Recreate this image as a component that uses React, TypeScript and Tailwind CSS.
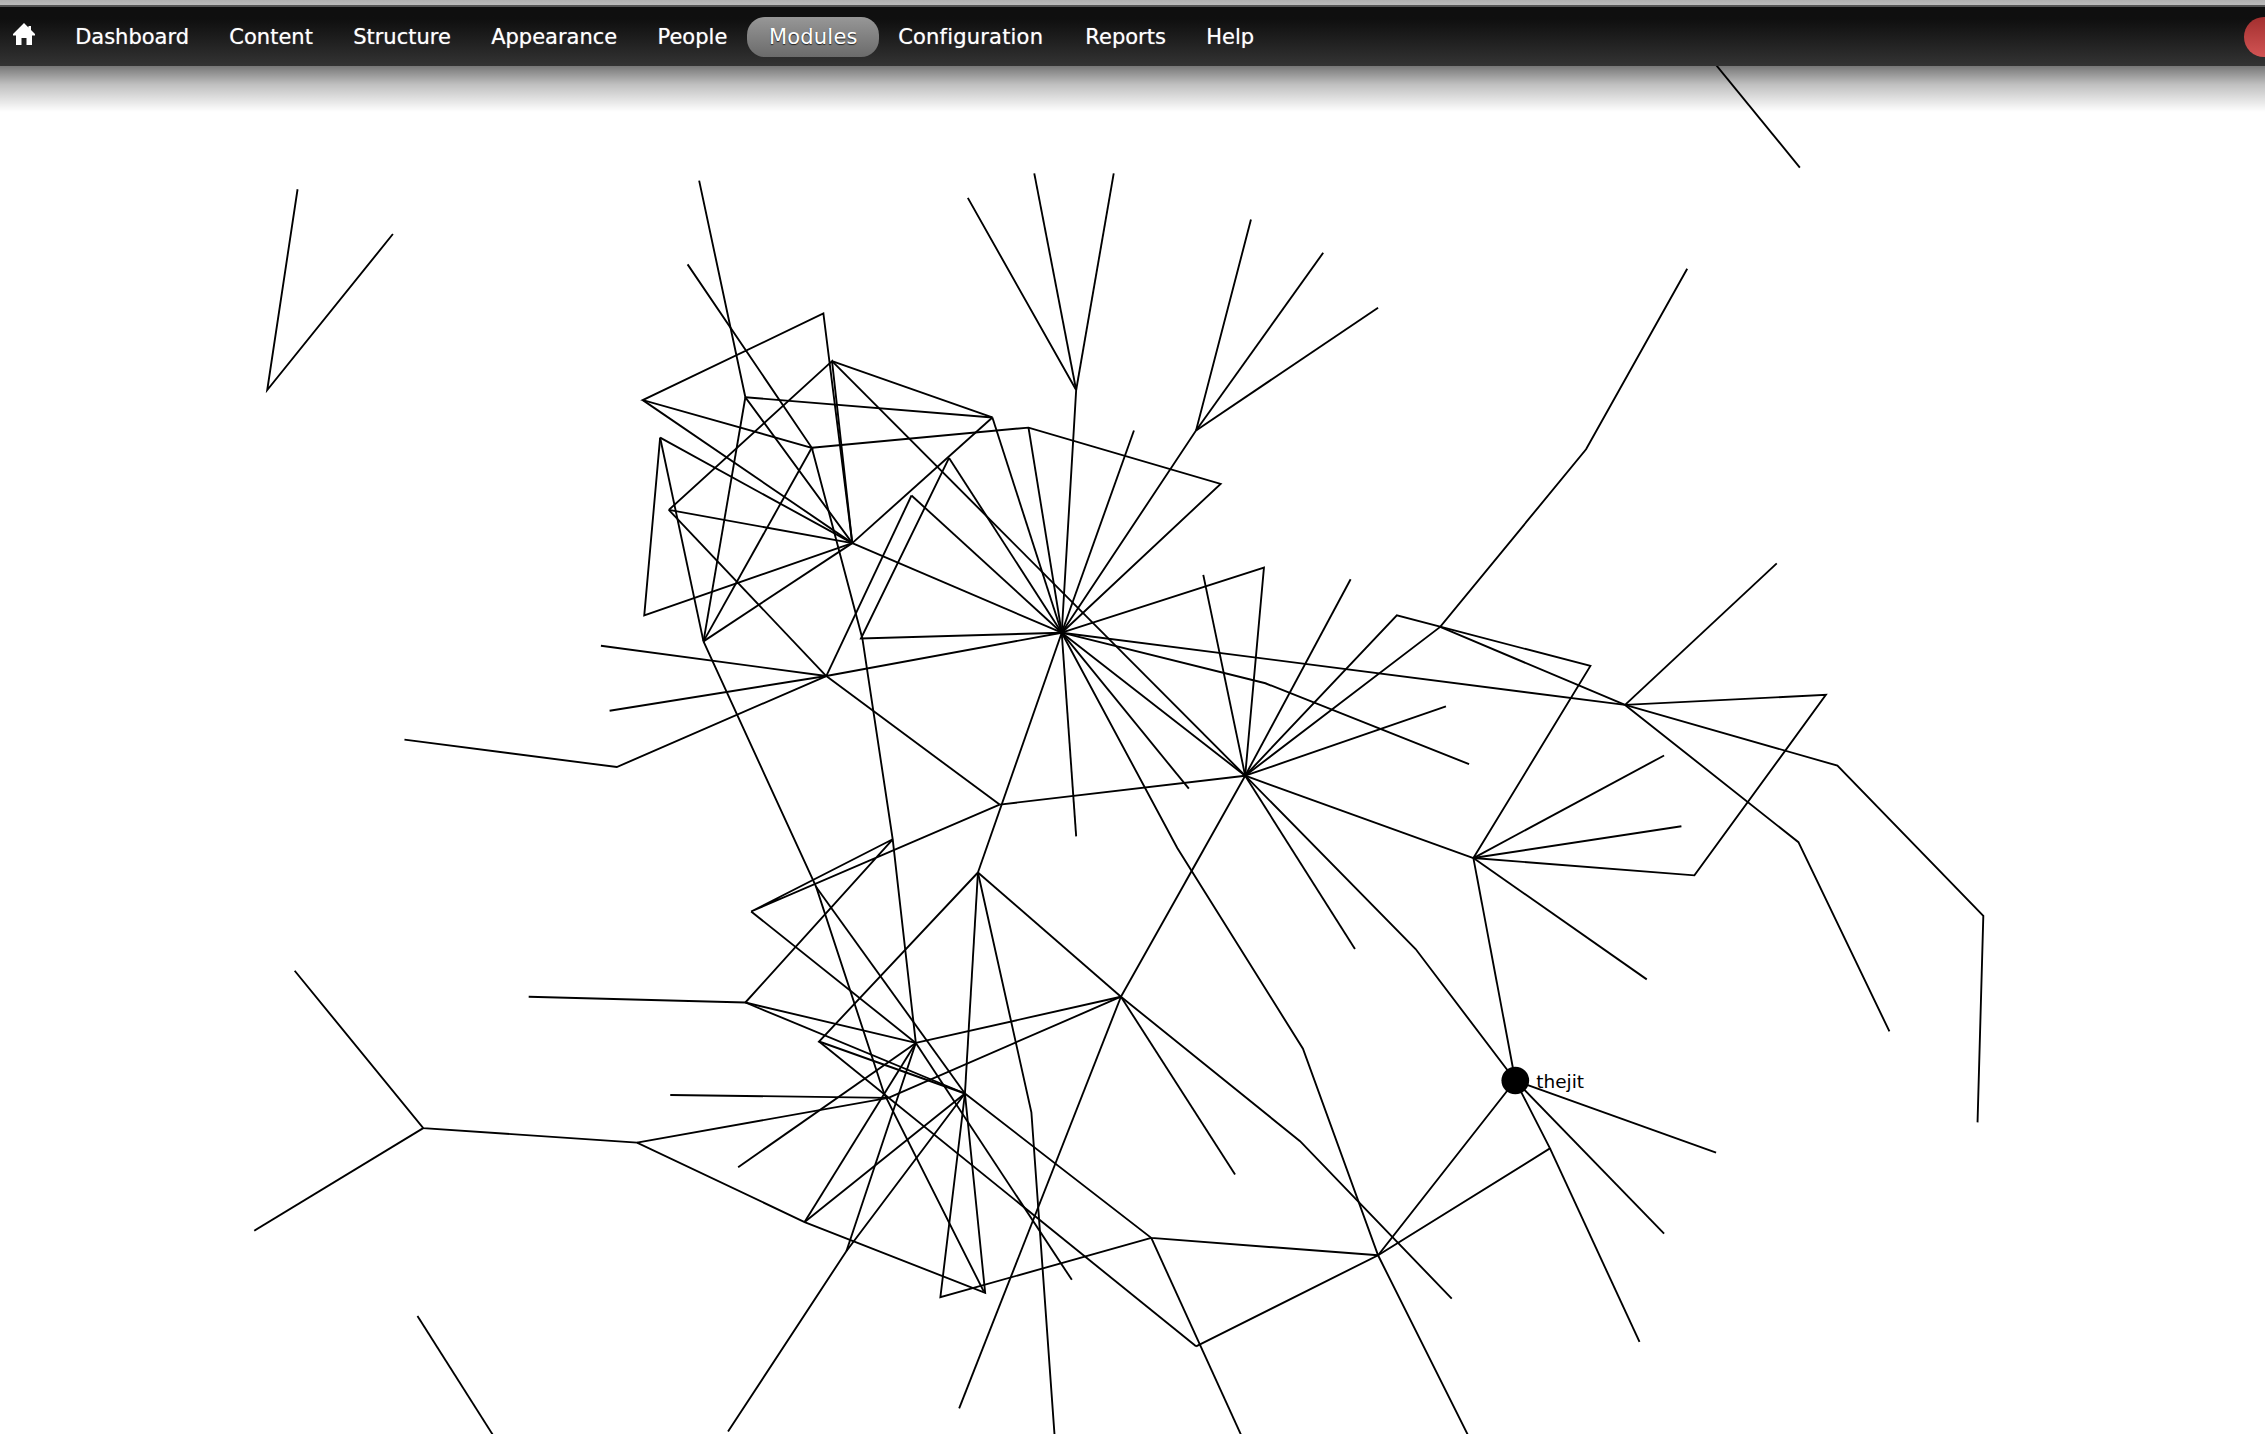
const items = [
  { label: "Dashboard", className: "px-[20.15px] pt-[3px]" },
  { label: "Content", className: "px-[20.15px] pt-[3px]" },
  { label: "Structure", className: "px-[20.15px] pt-[3px]" },
  { label: "Appearance", className: "px-[20.15px] pt-[3px]" },
  { label: "People", className: "px-[20.15px] pt-[3px]" },
  {
    label: "Modules",
    className:
      "flex h-[40px] items-center rounded-[18px] bg-gradient-to-b from-[#979797] to-[#6b6b6b] px-[21.5px] pt-[3px] tracking-[0.2px] [text-shadow:0_1px_1px_#222]",
  },
  { label: "Configuration", className: "pl-[19px] pr-[22px] pt-[3px] tracking-[0.2px]" },
  { label: "Reports", className: "px-[20.15px] pt-[3px]" },
  { label: "Help", className: "px-[20.15px] pt-[3px]" },
];

// graph edges, each one a polyline in the coordinates of the viewBox
const edges: number[][] = [
  [1188, 45, 1246, 116],
  [206, 131, 185, 270, 272, 162],
  [484, 125, 516, 275, 590, 376],
  [516, 275, 687, 289],
  [516, 275, 487, 444],
  [476, 183, 562, 310, 445, 277, 570, 217, 590, 376],
  [445, 277, 590, 376],
  [457, 303, 590, 376],
  [457, 303, 446, 426, 590, 376],
  [457, 303, 487, 444],
  [463, 353, 590, 376],
  [463, 353, 576, 250, 590, 376],
  [463, 353, 572, 468],
  [487, 444, 590, 376],
  [487, 444, 562, 310],
  [576, 250, 687, 289],
  [576, 250, 862, 537],
  [562, 310, 712, 296, 845, 335, 735, 438],
  [712, 296, 735, 438],
  [687, 289, 735, 438],
  [687, 289, 590, 376],
  [657, 317, 735, 438],
  [657, 317, 596, 442, 735, 438],
  [631, 343, 735, 438],
  [631, 343, 572, 468],
  [590, 376, 735, 438],
  [562, 310, 597, 442, 618, 581, 634, 722],
  [572, 468, 735, 438],
  [416, 447, 572, 468],
  [422, 492, 572, 468],
  [280, 512, 427, 531, 572, 468],
  [572, 468, 692, 557],
  [487, 444, 565, 614, 612, 757, 681, 894],
  [565, 614, 668, 757],
  [670, 137, 745, 270, 735, 438],
  [716, 120, 745, 270],
  [771, 120, 745, 270],
  [735, 438, 785, 298],
  [735, 438, 828, 298, 866, 152],
  [828, 298, 916, 175],
  [828, 298, 954, 213],
  [735, 438, 875, 393, 862, 537],
  [833, 398, 862, 537],
  [935, 401, 862, 537],
  [862, 537, 967, 426, 1101, 461, 1020, 594],
  [997, 434, 1125, 488],
  [735, 438, 876, 473, 1017, 529],
  [862, 537, 1001, 489],
  [862, 537, 997, 434, 1098, 311, 1168, 186],
  [735, 438, 1125, 488],
  [1125, 488, 1230, 390],
  [1125, 488, 1264, 481, 1173, 606, 1020, 594],
  [1125, 488, 1272, 530, 1373, 634, 1369, 777],
  [1125, 488, 1245, 583, 1308, 714],
  [1020, 594, 1152, 523],
  [1020, 594, 1164, 572],
  [1020, 594, 1140, 678],
  [1020, 594, 862, 537],
  [1020, 594, 1049, 748],
  [862, 537, 980, 657, 1049, 748],
  [862, 537, 938, 657],
  [862, 537, 692, 557],
  [862, 537, 776, 690],
  [735, 438, 862, 537],
  [735, 438, 823, 546],
  [735, 438, 745, 579],
  [735, 438, 677, 604],
  [735, 438, 815, 587, 902, 726, 954, 869, 1016, 993],
  [692, 557, 520, 631, 618, 581, 516, 694],
  [520, 631, 634, 722],
  [366, 690, 516, 694, 634, 722],
  [516, 694, 668, 757],
  [677, 604, 567, 721, 668, 757],
  [567, 721, 828, 932],
  [776, 690, 900, 790, 1005, 899],
  [776, 690, 855, 813],
  [776, 690, 677, 604],
  [776, 690, 634, 722],
  [776, 690, 615, 760],
  [776, 690, 664, 975],
  [677, 604, 668, 757],
  [677, 604, 714, 770, 730, 993],
  [634, 722, 511, 808],
  [634, 722, 557, 846],
  [634, 722, 586, 866],
  [634, 722, 742, 886],
  [464, 758, 615, 760, 441, 791],
  [668, 757, 557, 846],
  [668, 757, 586, 866, 504, 991],
  [668, 757, 651, 898, 797, 857],
  [668, 757, 682, 895, 557, 846, 441, 791, 293, 781, 204, 672],
  [293, 781, 176, 852],
  [668, 757, 797, 857, 954, 869],
  [797, 857, 859, 993],
  [828, 932, 954, 869, 1049, 748],
  [954, 869, 1073, 795, 1049, 748],
  [1073, 795, 1135, 929],
  [1049, 748, 1188, 798],
  [1049, 748, 1152, 854],
  [289, 911, 341, 993],
];

function HomeIcon() {
  return (
    <svg viewBox="0 0 22 22" className="h-[22px] w-[22px]" fill="#fff">
      <path d="M11 0 L15.5 4.5 V3 H18 V7 L22 11 V12.5 H19 V22 H13.5 V15 H8.5 V22 H3 V12.5 H0 V11 Z" />
    </svg>
  );
}

export default function App() {
  return (
    <div className="relative h-[1434px] w-full overflow-hidden bg-white font-['DejaVu_Sans',sans-serif]">
      <div className="h-[5px] bg-gradient-to-b from-[#b0b0b0] to-[#bcbcbc]" />
      <div className="h-[2px] bg-[#555555]" />
      <nav className="flex h-[59px] items-center bg-gradient-to-b from-[#0f0f0f] from-20% to-[#343434] pl-[13px] text-[21px] text-white [text-shadow:0_0_1px_rgba(255,255,255,0.6)]">
        <div className="mr-[20px] mt-[-5px]">
          <HomeIcon />
        </div>
        {items.map((item) => (
          <div key={item.label} className={item.className}>
            {item.label}
          </div>
        ))}
        <div className="ml-auto h-[40px] w-[21px] rounded-l-full bg-gradient-to-b from-[#a32f2f] to-[#d25454]" />
      </nav>
      <div className="pointer-events-none absolute left-0 right-0 top-[66px] z-10 h-[46px] bg-gradient-to-b from-[#00000088] via-[#00000040] via-40% to-[#00000000]" />
      <svg viewBox="0 45.7 1568 947" className="block h-[1368px] w-full">
        {edges.map((points, i) => (
          <polyline key={i} points={points.join(" ")} fill="none" stroke="#000" strokeWidth={1.3} />
        ))}
        <circle cx={1049} cy={748} r={9.6} fill="#000" />
        <text x={1063.5} y={753} fontSize={12.8} fill="#000">
          thejit
        </text>
      </svg>
    </div>
  );
}
